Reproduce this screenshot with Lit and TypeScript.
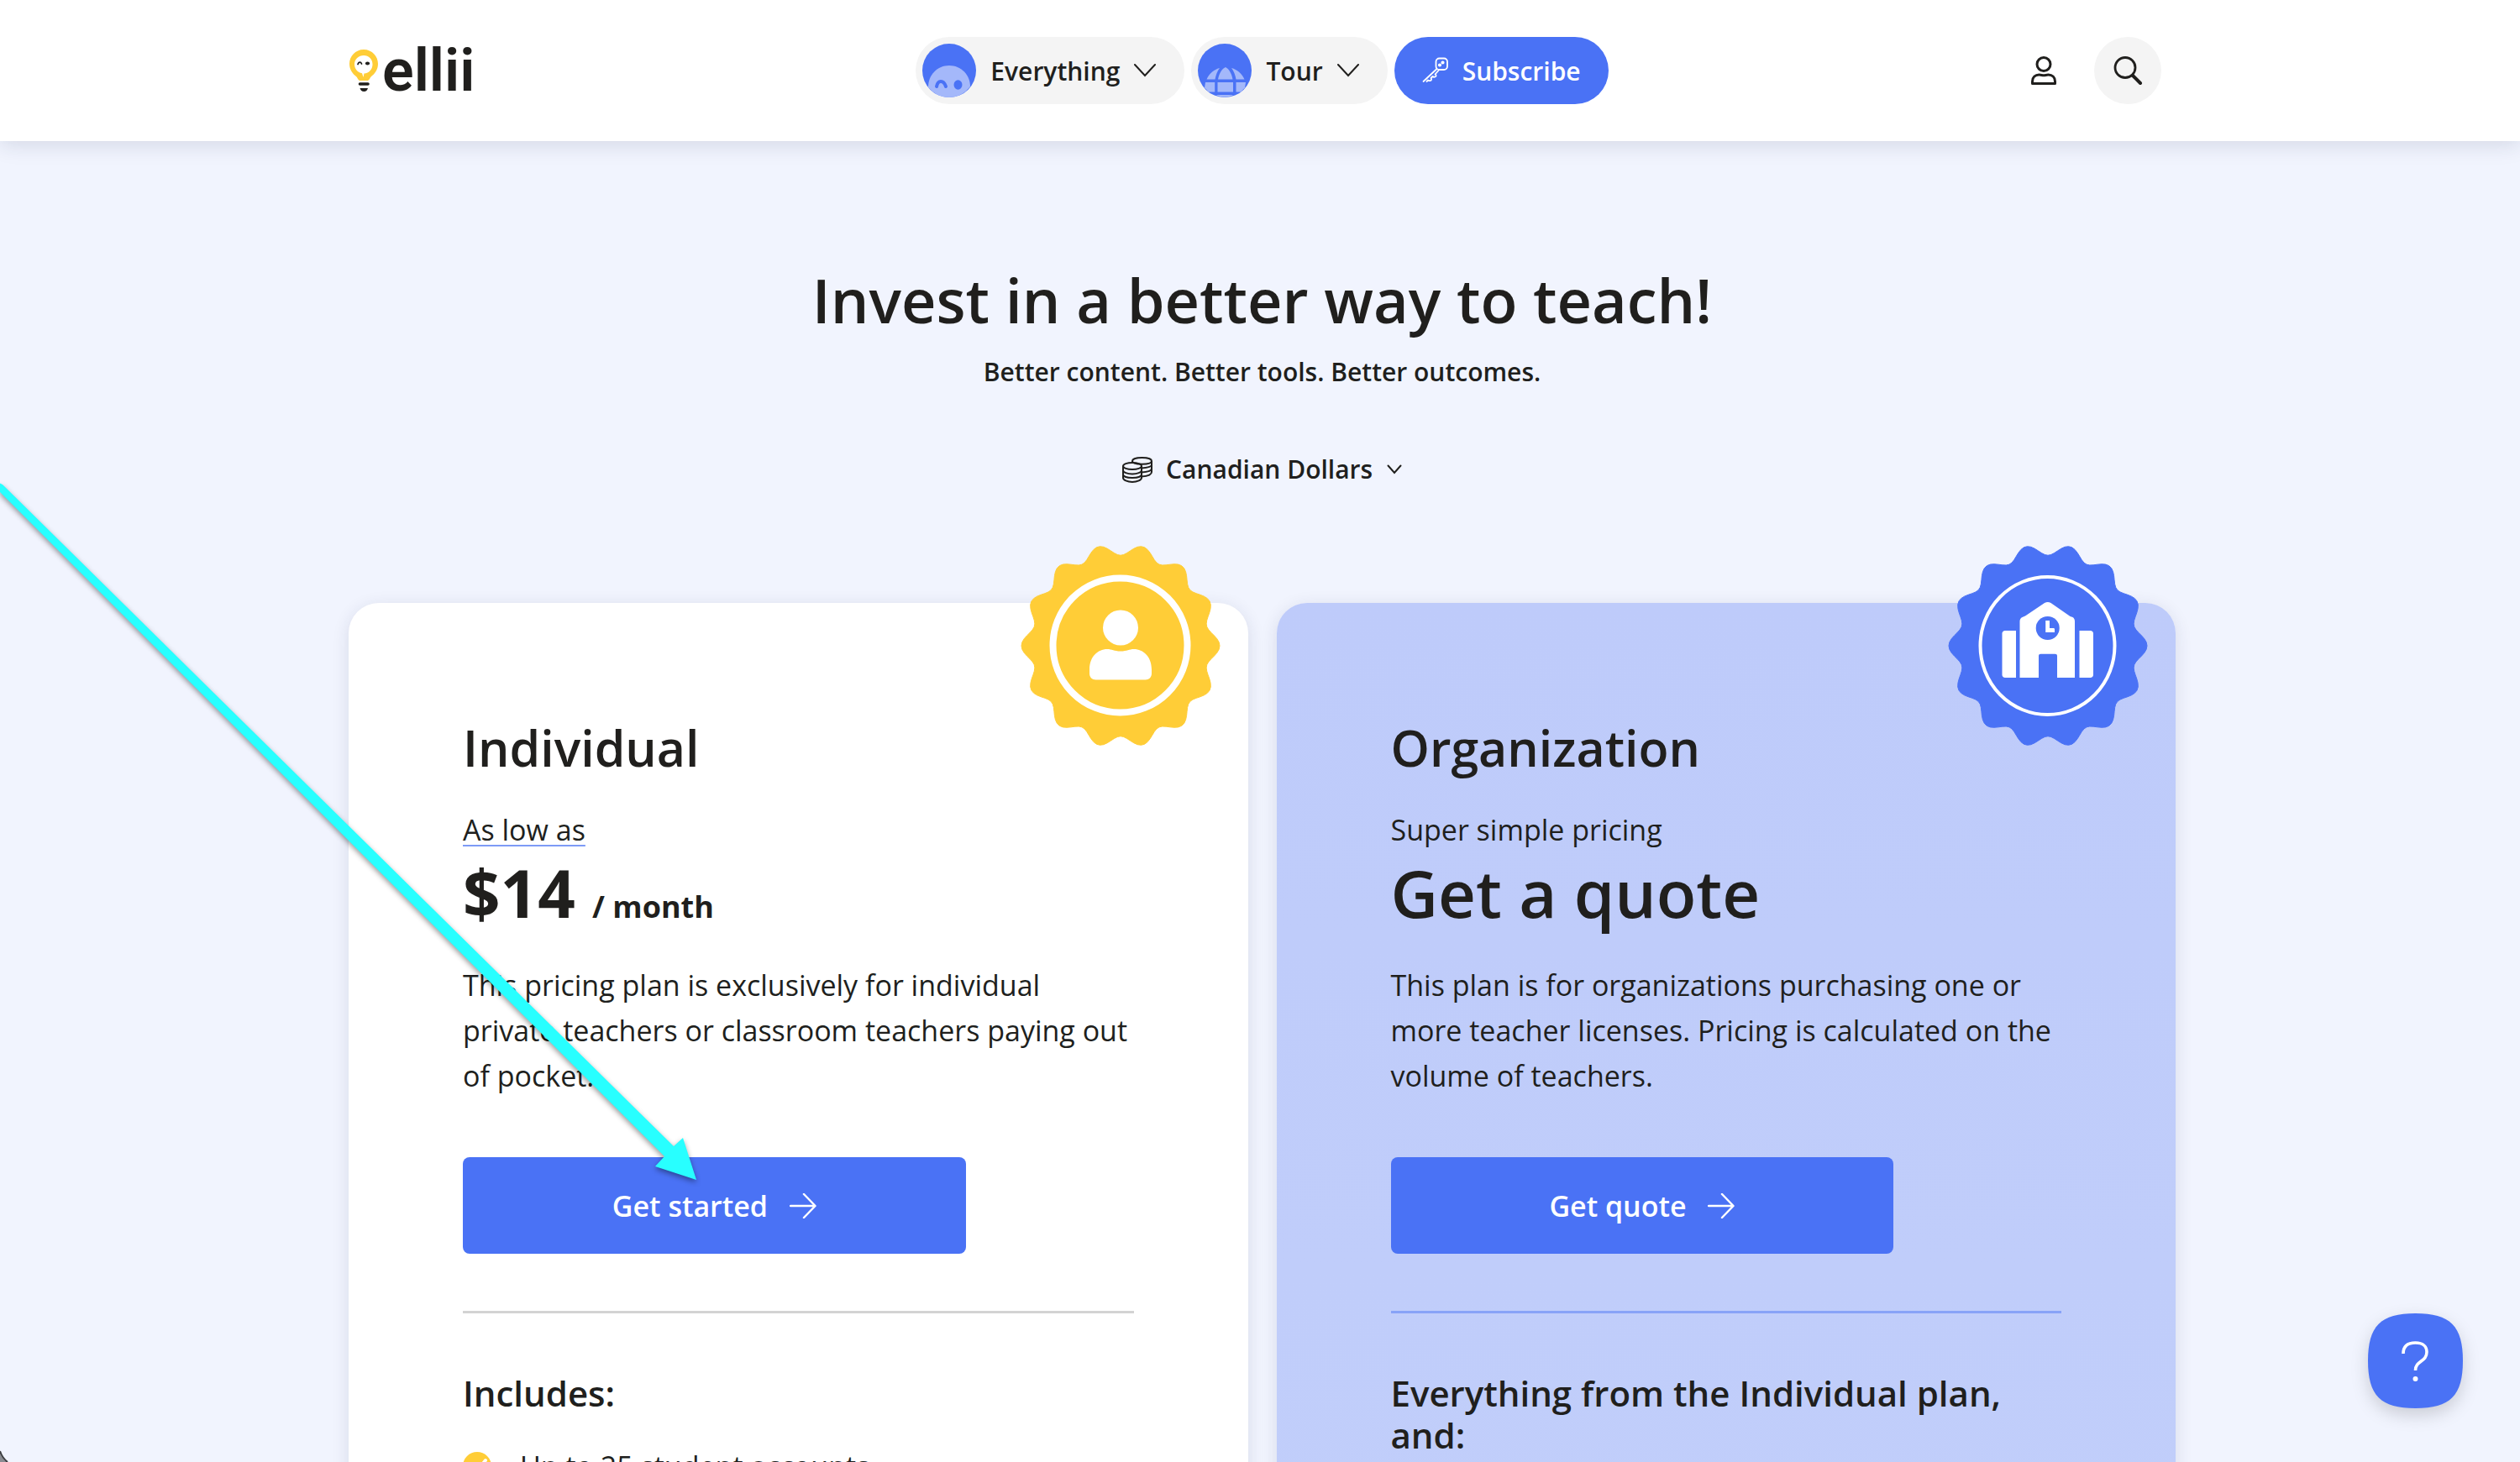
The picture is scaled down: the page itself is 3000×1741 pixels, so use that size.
import { LitElement, html, svg, css, nothing } from "lit";
import { customElement, property } from "lit/decorators.js";

const chevron = html`
  <svg class="chevron" viewBox="0 0 26 16" aria-hidden="true">
    <path d="M1 1L13 14L25 1" fill="none" stroke="currentColor" stroke-width="2" stroke-linecap="round" />
  </svg>
`;

const arrowRight = html`
  <svg class="cta-icon" viewBox="0 0 32 30" aria-hidden="true">
    <path d="M1 15H30M17 1L30.500 15L17 29" fill="none" stroke="currentColor" stroke-width="2.500" stroke-linecap="round" stroke-linejoin="round" />
  </svg>
`;

/** Outline of the rosette: fourteen scallops around a slightly tall circle. */
function rosettePath(): string {
  const points: string[] = [];
  for (let deg = 0; deg < 360; deg += 2) {
    const a = (deg * Math.PI) / 180;
    const r = 111.5 + 6.5 * Math.cos(14 * a);
    points.push(`${(120 + r * Math.cos(a)).toFixed(2)} ${(120 + 1.026 * r * Math.sin(a)).toFixed(2)}`);
  }
  return `M${points.join("L")}Z`;
}

const ROSETTE = rosettePath();

const personMark = svg`
  <ellipse cx="119.500" cy="119.500" rx="80" ry="80" fill="none" stroke="#fff" stroke-width="8" />
  <circle cx="120" cy="98.500" r="21" fill="#fff" />
  <path fill="#fff" d="M83 148C83 133 93 124 104 124C110 124 112 126.500 120 126.500C128 126.500 130 124 136 124C147 124 157 133 157 148V153C157 157.500 154 160.500 149.500 160.500H90.500C86 160.500 83 157.500 83 153Z" />
`;

const schoolMark = svg`
  <ellipse cx="119.500" cy="120" rx="80" ry="82" fill="none" stroke="#fff" stroke-width="4" />
  <path fill="#fff" d="M82 102H69C67 102 65.500 103.500 65.500 105.500V154.500C65.500 156.500 67 158 69 158H82Z" />
  <path fill="#fff" d="M157.500 102H170.500C172.500 102 174 103.500 174 105.500V154.500C174 156.500 172.500 158 170.500 158H157.500Z" />
  <path fill="#fff" d="M86.500 158V91C86.500 88.500 87.500 87 89.500 86L93 84.500L116 69C118.500 67.600 121 67.600 123.500 69L146.500 85L149.500 86C151 87 152 88.500 152 91V158H131V132C131 130.500 130 129.700 128.500 129.700H111.500C110 129.700 109 130.500 109 132V158Z" />
  <circle cx="119.700" cy="99" r="14" fill="#4a72f5" />
  <path fill="#fff" d="M117.200 90H122V99H126.500C127.500 99 128 99.500 128 100.500V104H117.200Z" />
`;

@customElement("plan-card")
export class PlanCard extends LitElement {
  @property() kind: "individual" | "organization" = "individual";
  @property() name = "";
  @property() lead = "";
  @property({ type: Boolean }) leadLink = false;
  @property() price = "";
  @property() period = "";
  @property() description = "";
  @property() action = "";
  @property() includes = "";
  @property({ attribute: false }) features: string[] = [];

  static styles = css`
    :host {
      display: block;
      min-width: 0;
    }
    .card {
      position: relative;
      box-sizing: border-box;
      height: 100%;
      padding: 136px;
      border-radius: 36px;
      background: #fff;
      box-shadow: 0 4px 20px rgba(30, 40, 80, 0.12);
    }
    .organization {
      background: linear-gradient(#becbfa, #c1cefa);
    }
    .badge {
      position: absolute;
      top: -69px;
      right: 32px;
      width: 240px;
      height: 240px;
      color: #ffcd37;
    }
    .organization .badge {
      color: #4a72f5;
    }
    h2 {
      margin: 0;
      font-size: 59px;
      line-height: 72px;
      font-weight: 600;
    }
    .lead {
      margin: 35px 0 0;
      font-size: 34px;
      line-height: 54px;
    }
    .lead a {
      color: inherit;
      text-decoration: underline 2px #7d9af6;
      text-decoration-skip-ink: none;
      text-underline-offset: 5px;
    }
    .price {
      margin: 0;
      font-size: 78px;
      line-height: 96px;
      font-weight: 600;
    }
    .individual .price {
      font-weight: 700;
    }
    .period {
      font-size: 36px;
      line-height: 36px;
    }
    .description {
      margin: 35px 0 70px;
      font-size: 34px;
      line-height: 54px;
    }
    .cta {
      display: flex;
      align-items: center;
      justify-content: center;
      gap: 26px;
      box-sizing: border-box;
      width: 75%;
      height: 115px;
      border-radius: 8px;
      background: #4a72f5;
      color: #fff;
      font-size: 34px;
      font-weight: 600;
      text-decoration: none;
    }
    .cta-icon {
      width: 32px;
      height: 30px;
    }
    hr {
      height: 3px;
      margin: 68px 0 70px;
      border: 0;
      background: #d3d3d3;
    }
    .organization hr {
      background: #88a3f7;
    }
    h3 {
      margin: 0;
      font-size: 42px;
      line-height: 50px;
      font-weight: 600;
    }
    ul {
      margin: 35px 0 0;
      padding: 0;
      list-style: none;
      font-size: 34px;
      line-height: 54px;
    }
    li {
      display: flex;
      align-items: center;
      gap: 34px;
    }
    .tick {
      width: 34px;
      height: 34px;
    }
  `;

  render() {
    return html`
      <article class="card ${this.kind}">
        <svg class="badge" viewBox="0 0 240 240" aria-hidden="true">
          <path d=${ROSETTE} fill="currentColor" stroke="currentColor" stroke-linejoin="round" />
          ${this.kind === "individual" ? personMark : schoolMark}
        </svg>
        <h2>${this.name}</h2>
        <p class="lead">${this.leadLink ? html`<a href="#pricing">${this.lead}</a>` : this.lead}</p>
        <p class="price">${this.price}${this.period ? html` <span class="period">${this.period}</span>` : nothing}</p>
        <p class="description">${this.description}</p>
        <a class="cta" href="#${this.kind}">${this.action}${arrowRight}</a>
        <hr />
        <h3>${this.includes}</h3>
        ${this.features.length
          ? html`<ul>
              ${this.features.map(
                (feature) => html`<li>
                  <svg class="tick" viewBox="0 0 34 34" aria-hidden="true">
                    <circle cx="17" cy="17" r="17" fill="#ffcd37" />
                    <path d="M9 19L15 25L27 10" fill="none" stroke="#fff" stroke-width="4" stroke-linecap="round" />
                  </svg>
                  ${feature}
                </li>`
              )}
            </ul>`
          : nothing}
      </article>
    `;
  }
}

@customElement("site-header")
export class SiteHeader extends LitElement {
  static styles = css`
    :host {
      display: block;
      position: relative;
      padding-left: 5px;
      background: #fff;
      box-shadow: 0 4px 24px rgba(30, 40, 70, 0.14);
    }
    .bar {
      display: grid;
      grid-template-columns: 1fr auto 1fr;
      align-items: center;
      box-sizing: border-box;
      max-width: 2175px;
      height: 168px;
      margin: 0 auto;
    }
    .logo {
      display: flex;
      align-items: center;
      gap: 4px;
      color: #201f1d;
      font-family: Roboto, sans-serif;
      font-size: 70px;
      line-height: 80px;
      font-weight: 600;
      text-decoration: none;
    }
    .bulb {
      width: 36px;
      height: 52px;
    }
    nav {
      display: flex;
      gap: 8px;
    }
    button,
    .subscribe {
      display: flex;
      align-items: center;
      box-sizing: border-box;
      height: 80px;
      padding: 0;
      border: 0;
      border-radius: 40px;
      background: #f4f4f4;
      color: inherit;
      font-family: inherit;
      font-size: 30px;
      font-weight: 600;
      text-decoration: none;
    }
    .menu {
      gap: 17px;
      padding: 0 34px 0 8px;
    }
    .disc {
      width: 64px;
      height: 64px;
    }
    .chevron {
      width: 26px;
      height: 16px;
    }
    .subscribe {
      gap: 16px;
      padding: 0 33px;
      background: #4a72f5;
      color: #fff;
    }
    .key {
      width: 32px;
      height: 32px;
    }
    .actions {
      display: flex;
      justify-content: flex-end;
      gap: 20px;
      padding-right: 17px;
    }
    .actions button {
      justify-content: center;
      width: 80px;
    }
    .actions .user {
      background: none;
    }
    .action-icon {
      width: 36px;
      height: 36px;
    }
  `;

  render() {
    return html`
      <header class="bar">
        <a class="logo" href="#home">
          <svg class="bulb" viewBox="0 0 36 52" aria-hidden="true">
            <path d="M18 1C8 1 1 9 1 18C1 25 5 30 9 33C11 35 11 37 13 38H23C25 37 25 35 27 33C31 30 35 25 35 18C35 9 28 1 18 1Z" fill="#ffcd37" />
            <path d="M18 8C12 8 7 12.500 7 18.500C7 24 11 28.500 16 29.200L17.500 34L18.500 29.500C24.500 29 28.500 24.500 28.500 18.500C28.500 12.500 24 8 18 8Z" fill="#fff" />
            <path d="M11 18.500C12 15.500 14.500 15.500 15.500 18" fill="none" stroke="#201f1d" stroke-width="1.800" stroke-linecap="round" />
            <ellipse cx="22.500" cy="17.500" rx="2.600" ry="2.100" fill="#201f1d" />
            <path d="M13.500 42H23" stroke="#201f1d" stroke-width="3.600" stroke-linecap="round" />
            <path d="M13.500 47H23C22 49.500 21 51 18.300 51C15.500 51 14.500 49.500 13.500 47Z" fill="#201f1d" />
          </svg>
          ellii
        </a>
        <nav aria-label="Main">
          <button class="menu" type="button" aria-haspopup="true">
            <svg class="disc" viewBox="0 0 64 64" aria-hidden="true">
              <circle cx="32" cy="32" r="32" fill="#4a72f5" />
              <path d="M7 52C7 37 18 26 32 26C46 26 57 37 57 51C51 59 42 64 32 64C21 64 13 59 7 52Z" fill="#a4b8fa" />
              <path d="M17 51C18 46 20 45 22 45C25 45 27 48 28 51" fill="none" stroke="#4a72f5" stroke-width="4" stroke-linecap="round" />
              <ellipse cx="42.500" cy="49" rx="5" ry="5.700" fill="#4a72f5" />
            </svg>
            Everything ${chevron}
          </button>
          <button class="menu" type="button" aria-haspopup="true">
            <svg class="disc" viewBox="0 0 64 64" aria-hidden="true">
              <circle cx="32" cy="32" r="32" fill="#4a72f5" />
              <path fill="#a4b8fa" d="M33 28C37 30 40 35 41.500 42.500H24C25.500 35 28.500 30 33 28Z" />
              <path fill="#a4b8fa" d="M26 29C23 33 21.500 37 20.500 42.500H10.500C14 35 19 31 26 29ZM40 29C43 33 44.500 37 45.500 42.500H55.500C52 35 47 31 40 29Z" />
              <path fill="#a4b8fa" d="M9 46H20.200V57.500H13L8 52.500ZM23.500 46H42V57.500H23.500ZM45.500 46H57L56 52.500L51 57.500H45.500Z" />
              <path fill="#a4b8fa" d="M22 61H42C36 64.500 28 64.500 22 61Z" />
            </svg>
            Tour ${chevron}
          </button>
          <a class="subscribe" href="#subscribe">
            <svg class="key" viewBox="0 0 32 32" aria-hidden="true" fill="none" stroke="currentColor" stroke-width="1.800" stroke-linecap="round" stroke-linejoin="round">
              <rect x="16.500" y="1.500" width="13.500" height="13.500" rx="4" />
              <path d="M17 14.500L1.500 29M19.500 16L15.500 20.500C17 21 17 23 15.500 23.500C14 24 13 23.500 12.500 23L10.500 25C11.500 26 11 27.500 10 28C8.500 28.500 8 28 7 27.500L5.500 29" />
              <circle cx="24.500" cy="6.500" r="1.200" fill="currentColor" />
              <circle cx="21" cy="9.500" r="1.200" fill="currentColor" />
            </svg>
            Subscribe
          </a>
        </nav>
        <div class="actions">
          <button class="user" type="button" aria-label="Account">
            <svg class="action-icon" viewBox="0 0 36 36" aria-hidden="true" fill="none" stroke="#201f1d" stroke-width="3">
              <circle cx="18" cy="10.500" r="8" />
              <path d="M4.500 33.500V31C4.500 26 8 23 12.500 23C15 23 16 23.800 18 23.800C20 23.800 21 23 23.500 23C28 23 31.500 26 31.500 31V33.500Z" stroke-linejoin="round" />
            </svg>
          </button>
          <button type="button" aria-label="Search">
            <svg class="action-icon" viewBox="0 0 36 36" aria-hidden="true" fill="none" stroke="#201f1d">
              <circle cx="15" cy="14.500" r="12" stroke-width="2.800" />
              <path d="M24 24L33 33" stroke-width="4" stroke-linecap="round" />
            </svg>
          </button>
        </div>
      </header>
    `;
  }
}

@customElement("app-root")
export class AppRoot extends LitElement {
  static styles = css`
    :host {
      display: block;
      position: relative;
      height: 100vh;
      overflow: hidden;
      background: #f1f4fe;
      color: #201f1d;
      font-family: "Open Sans", "Noto Sans", sans-serif;
    }
    main {
      padding: 141px 0 0 5px;
    }
    .intro {
      display: flex;
      flex-direction: column;
      align-items: center;
      text-align: center;
    }
    h1 {
      margin: 0;
      font-size: 72px;
      line-height: 96px;
      font-weight: 600;
    }
    .tagline {
      margin: 18px 0 76px;
      font-size: 30px;
      line-height: 40px;
      font-weight: 600;
    }
    .currency {
      display: flex;
      align-items: center;
      gap: 16px;
    }
    .currency select {
      appearance: none;
      height: 40px;
      padding: 0;
      border: 0;
      background: none;
      color: inherit;
      font-family: inherit;
      font-size: 30px;
      line-height: 40px;
      font-weight: 600;
    }
    .coins {
      width: 36px;
      height: 32px;
    }
    .currency .chevron {
      width: 18px;
      height: 12px;
    }
    .plans {
      display: grid;
      grid-template-columns: 1fr 1fr;
      gap: 34px;
      max-width: 2175px;
      margin: 139px auto 0;
    }
    .pointer {
      position: absolute;
      left: 0;
      top: 560px;
      width: 850px;
      height: 860px;
      pointer-events: none;
      filter: drop-shadow(0 3px 3px rgba(0, 0, 0, 0.4));
    }
    .help {
      position: absolute;
      right: 68px;
      bottom: 64px;
      width: 113px;
      height: 113px;
      padding: 0;
      border: 0;
      background: none;
      filter: drop-shadow(0 8px 10px rgba(0, 0, 0, 0.16));
    }
    .help svg {
      display: block;
      width: 100%;
      height: 100%;
    }
    .corner {
      position: absolute;
      left: 0;
      bottom: 0;
      width: 10px;
      height: 16px;
    }
  `;

  render() {
    return html`
      <site-header></site-header>
      <main>
        <section class="intro">
          <h1>Invest in a better way to teach!</h1>
          <p class="tagline">Better content. Better tools. Better outcomes.</p>
          <label class="currency">
            <svg class="coins" viewBox="0 0 36 32" role="img" aria-label="Currency" fill="none" stroke="currentColor" stroke-width="2">
              <ellipse cx="12" cy="12" rx="11" ry="4" />
              <path d="M1 12V26C1 28.500 6 31 12 31C18 31 23 28.500 23 26V12M1 17C1 19.500 6 21.500 12 21.500C18 21.500 23 19.500 23 17M1 22C1 24.500 6 26 12 26C18 26 23 24.500 23 22" />
              <path d="M12 7.500V6C12 3.500 17 2 23.500 2C30 2 35 3.500 35 6V19C35 22 30 24 23 24.500M12 6C12 8.500 17 9.800 23.500 9.800C30 9.800 35 8.500 35 6M23 14.500C30 14 35 13 35 10.500M23 19.500C30 19 35 17.500 35 15" />
            </svg>
            <select>
              <option>Canadian Dollars</option>
            </select>
            <svg class="chevron" viewBox="0 0 18 12" aria-hidden="true">
              <path d="M1.500 1.500L9 10L16.500 1.500" fill="none" stroke="currentColor" stroke-width="2" stroke-linecap="round" />
            </svg>
          </label>
        </section>
        <section class="plans">
          <plan-card
            kind="individual"
            name="Individual"
            lead="As low as"
            ?leadLink=${true}
            price="$14"
            period="/ month"
            description="This pricing plan is exclusively for individual private teachers or classroom teachers paying out of pocket."
            action="Get started"
            includes="Includes:"
            .features=${["Up to 25 student accounts"]}
          ></plan-card>
          <plan-card
            kind="organization"
            name="Organization"
            lead="Super simple pricing"
            price="Get a quote"
            description="This plan is for organizations purchasing one or more teacher licenses. Pricing is calculated on the volume of teachers."
            action="Get quote"
            includes="Everything from the Individual plan, and:"
          ></plan-card>
        </section>
      </main>
      <svg class="pointer" viewBox="0 0 850 860" aria-hidden="true">
        <path d="M-3 14L3 17L802 805L813 795L829 845L780 829L791 817L-3 23Z" fill="#28ffff" />
      </svg>
      <button class="help" type="button" aria-label="Help">
        <svg viewBox="0 0 113 113" aria-hidden="true">
          <path d="M56.500 0C98 0 113 15 113 56.500C113 98 98 113 56.500 113C15 113 0 98 0 56.500C0 15 15 0 56.500 0Z" fill="#4a72f5" />
          <path d="M42 48C42 39 47 35 56.500 35C66 35 70 40 70 46C70 58 56.500 56 56.500 68" fill="none" stroke="#fff" stroke-width="3.600" />
          <circle cx="56.500" cy="78" r="3" fill="#fff" />
        </svg>
      </button>
      <svg class="corner" viewBox="0 0 10 16" aria-hidden="true">
        <path d="M0 3C2 9 5 13 9 16H0Z" fill="#8a8c92" />
        <path d="M0 3C2 9 5 13 9 16" fill="none" stroke="#3c3d40" stroke-width="2" />
      </svg>
    `;
  }
}
